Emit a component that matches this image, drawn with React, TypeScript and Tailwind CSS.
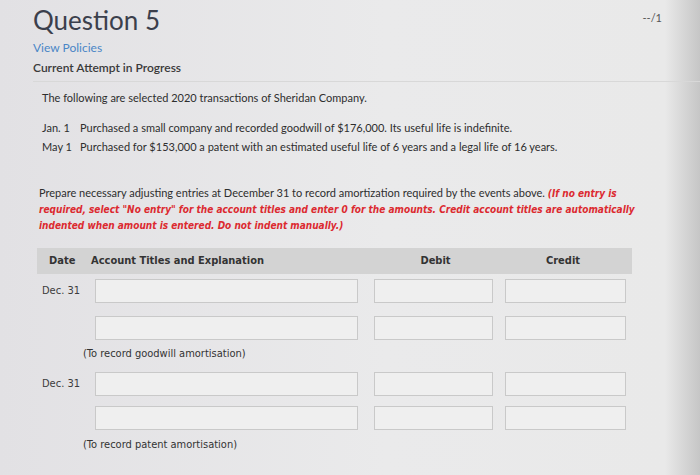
import React from 'react';

function Field({ className }: { className: string }) {
  return <div className={`h-[24px] border border-[#c9c9c9] bg-[#efefef] ${className}`} />;
}

function EntryRow({ date }: { date?: string }) {
  return (
    <div className="flex items-center">
      <div className="w-[58px] pl-[5px] text-[11px] text-[#3c3c3c]">{date}</div>
      <Field className="w-[263px]" />
      <Field className="ml-[16px] w-[119px]" />
      <Field className="ml-[12px] w-[121px]" />
    </div>
  );
}

export default function App() {
  return (
    <div className="relative h-[475px] w-[700px] overflow-hidden bg-[linear-gradient(to_right,#e2e1e4,#eaeaeb_55%,#e9e9e9_95%,#c6c6c6)] font-['Lato',sans-serif] text-[#333]">
      <div className="pl-[33px] pt-[5px]">
        <div className="flex items-start justify-between pr-[38px]">
          <h1 className="text-[26px] leading-[30px] text-[#3b3f4c]">Question 5</h1>
          <span className="mt-[5px] text-[11px] text-[#555]">--/1</span>
        </div>
        <div className="mt-[6px] text-[12px] leading-[14px] text-[#4a86c6]">View Policies</div>
        <div className="mt-[6px] text-[12px] font-semibold leading-[14px] text-[#3a3a3a]">Current Attempt in Progress</div>
        <div className="mt-[6px] border-t border-[#d8d8d8]" />

        <div className="pl-[9px] pt-[8px] text-[11px] leading-[16px] text-[#2e2e2e]">
          <p>The following are selected 2020 transactions of Sheridan Company.</p>
          <div className="mt-[14px] flex flex-col gap-[3px]">
            <div className="flex"><span className="w-[38px]">Jan. 1</span><span>Purchased a small company and recorded goodwill of $176,000. Its useful life is indefinite.</span></div>
            <div className="flex"><span className="w-[38px]">May 1</span><span>Purchased for $153,000 a patent with an estimated useful life of 6 years and a legal life of 16 years.</span></div>
          </div>
          <p className="-ml-[3px] mt-[30px] w-[610px] leading-[15px]">
            Prepare necessary adjusting entries at December 31 to record amortization required by the events above.{' '}
            <span className="font-['DejaVu_Sans_Condensed',sans-serif] text-[10px] font-bold italic leading-[15px] text-[#dc2a30]">
              (If no entry is required, select "No entry" for the account titles and enter 0 for the amounts. Credit account titles are automatically indented when amount is entered. Do not indent manually.)
            </span>
          </p>
        </div>

        <div className="ml-[4px] mt-[15px] w-[595px] font-['DejaVu_Sans_Condensed',sans-serif]">
          <div className="flex h-[26px] items-center bg-[#d3d3d3] text-[11px] font-bold text-[#333]">
            <span className="w-[54px] pl-[12px]">Date</span>
            <span className="w-[283px]">Account Titles and Explanation</span>
            <span className="w-[123px] text-center">Debit</span>
            <span className="w-[132px] text-center">Credit</span>
          </div>
          <div className="mt-[5px] flex flex-col">
            <EntryRow date="Dec. 31" />
            <div className="mt-[13px]"><EntryRow /></div>
            <div className="mt-[6px] pl-[46px] text-[11px] leading-[16px] text-[#333]">(To record goodwill amortisation)</div>
            <div className="mt-[10px]"><EntryRow date="Dec. 31" /></div>
            <div className="mt-[10px]"><EntryRow /></div>
            <div className="mt-[7px] pl-[46px] text-[11px] leading-[16px] text-[#333]">(To record patent amortisation)</div>
          </div>
        </div>
      </div>
    </div>
  );
}
